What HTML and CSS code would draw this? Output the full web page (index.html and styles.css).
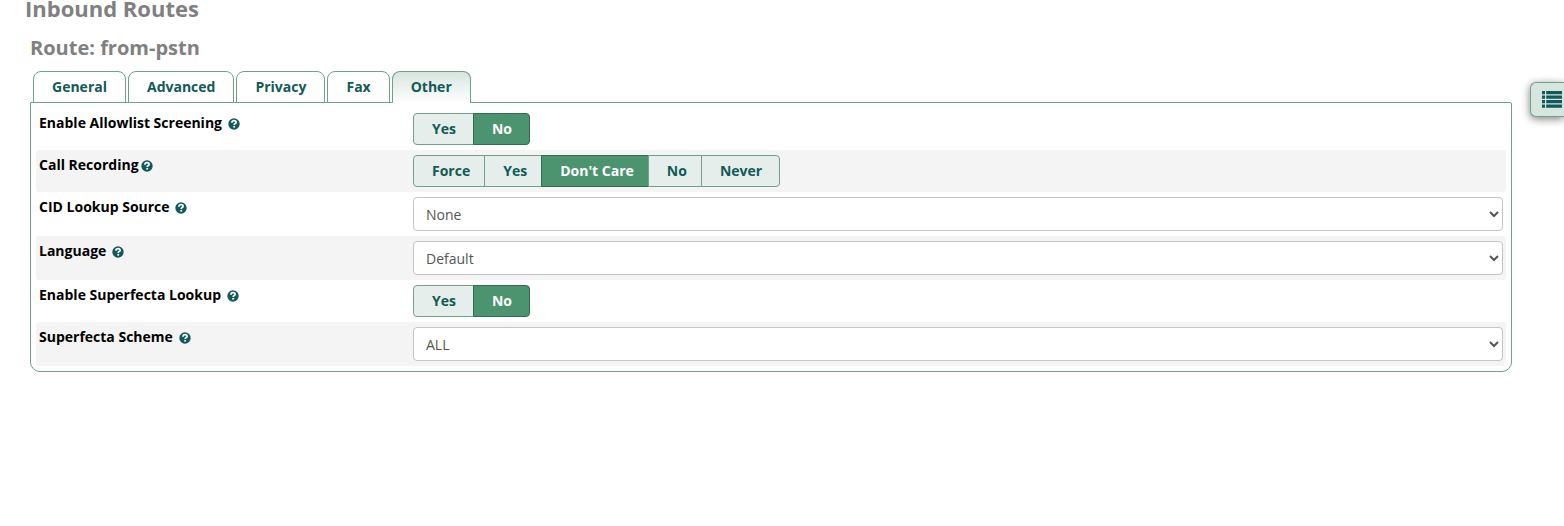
FILE: index.html
```
<!DOCTYPE html>
<html lang="en">
  <head>
    <meta charset="UTF-8" />
    <meta name="viewport" content="width=device-width, initial-scale=1.0" />
    <title>Inbound Routes</title>
    <link rel="stylesheet" href="styles.css">
  </head>
  <body>
    <!-- Shared help icon -->
    <svg class="sprite" aria-hidden="true">
      <symbol id="help" viewBox="0 0 12 12">
        <circle cx="6" cy="6" r="5.700" fill="#115a57" />
        <path d="M3.900 4.700C4 3.200 5 2.700 6.100 2.700C7.300 2.700 8.100 3.400 8.100 4.400C8.100 5.700 6.200 5.500 6.200 7" fill="none" stroke="#fff" stroke-width="1.700" />
        <rect x="5.300" y="7.900" width="1.800" height="1.700" fill="#fff" />
      </symbol>
    </svg>

    <main class="container">
      <h1>Inbound Routes</h1>
      <h2>Route: from-pstn</h2>

      <!-- Tabs -->
      <div class="tabs" role="tablist">
        <button class="tab" type="button" role="tab">General</button>
        <button class="tab" type="button" role="tab">Advanced</button>
        <button class="tab" type="button" role="tab">Privacy</button>
        <button class="tab" type="button" role="tab">Fax</button>
        <button class="tab active" type="button" role="tab" aria-selected="true">Other</button>
      </div>

      <form class="panel">
        <div class="row">
          <div class="label"><span id="allowlist-label">Enable Allowlist Screening</span> <svg class="help"><use href="#help" /></svg></div>
          <div class="radioset" role="radiogroup" aria-labelledby="allowlist-label">
            <input type="radio" name="allowlist" id="allowlist-yes" /><label for="allowlist-yes">Yes</label>
            <input type="radio" name="allowlist" id="allowlist-no" checked /><label for="allowlist-no">No</label>
          </div>
        </div>

        <div class="row">
          <div class="label"><span id="recording-label">Call Recording</span><svg class="help"><use href="#help" /></svg></div>
          <div class="radioset radioset-tight" role="radiogroup" aria-labelledby="recording-label">
            <input type="radio" name="recording" id="rec-force" /><label for="rec-force">Force</label>
            <input type="radio" name="recording" id="rec-yes" /><label for="rec-yes">Yes</label>
            <input type="radio" name="recording" id="rec-dontcare" checked /><label for="rec-dontcare">Don't Care</label>
            <input type="radio" name="recording" id="rec-no" /><label for="rec-no">No</label>
            <input type="radio" name="recording" id="rec-never" /><label for="rec-never">Never</label>
          </div>
        </div>

        <div class="row">
          <div class="label"><label for="cidlookup">CID Lookup Source</label> <svg class="help"><use href="#help" /></svg></div>
          <select id="cidlookup"><option>None</option></select>
        </div>

        <div class="row">
          <div class="label"><label for="language">Language</label> <svg class="help"><use href="#help" /></svg></div>
          <select id="language"><option>Default</option></select>
        </div>

        <div class="row">
          <div class="label"><span id="superfecta-label">Enable Superfecta Lookup</span> <svg class="help"><use href="#help" /></svg></div>
          <div class="radioset" role="radiogroup" aria-labelledby="superfecta-label">
            <input type="radio" name="superfecta" id="superfecta-yes" /><label for="superfecta-yes">Yes</label>
            <input type="radio" name="superfecta" id="superfecta-no" checked /><label for="superfecta-no">No</label>
          </div>
        </div>

        <div class="row">
          <div class="label"><label for="scheme">Superfecta Scheme</label> <svg class="help"><use href="#help" /></svg></div>
          <select id="scheme"><option>ALL</option></select>
        </div>
      </form>
    </main>

    <!-- Floating list toggle -->
    <button class="list-toggle" type="button" aria-label="Show list">
      <svg width="20" height="17" viewBox="0 0 20 17" fill="#115a57">
        <path d="M0 0h3v3.200H0zM0 4.500h3v3.200H0zM0 9h3v3.200H0zM0 13.500h3v3.200H0zM4.200 0H20v3.200H4.200zM4.200 4.500H20v3.200H4.200zM4.200 9H20v3.200H4.200zM4.200 13.500H20v3.200H4.200z" />
      </svg>
    </button>
  </body>
</html>
```
FILE: styles.css
```
* {
  box-sizing: border-box;
}

body {
  margin: 0;
  font-family: "Open Sans", sans-serif;
  font-size: 14px;
  line-height: 20px;
  color: #000;
  background: #fff;
}

.sprite {
  display: none;
}

.container {
  padding: 0 52px 0 30px;
}

h1,
h2 {
  margin: 0;
  font-weight: bold;
  color: #808080;
}

h1 {
  margin-left: -5px;
  font-size: 22px;
  line-height: 16px;
}

h2 {
  padding: 20px 0 11px;
  font-size: 20px;
  line-height: 24px;
}

/* Tabs */
.tabs {
  display: flex;
  gap: 2px;
  padding-left: 3px;
  position: relative;
  z-index: 1;
}

.tab {
  height: 32px;
  margin-bottom: -1px;
  padding: 0 18px 2px;
  border: 1px solid #6fa18b;
  border-radius: 8px 8px 0 0;
  background: #fff;
  color: #115a57;
  font: bold 14px "Open Sans", sans-serif;
  cursor: pointer;
}

.tab.active {
  border-bottom: 0;
  background: linear-gradient(#d7e5df, #fff);
}

/* Form panel */
.panel {
  padding: 5px;
  border: 1px solid #6fa18b;
  border-radius: 0 2px 10px 10px;
}

.row {
  display: grid;
  grid-template-columns: 374px 1fr;
  padding: 5px 3px;
  border-radius: 3px;
}

.row:nth-child(even) {
  background: #f4f4f4;
}

.label {
  font-weight: bold;
}

.help {
  width: 12px;
  height: 12px;
  margin-left: 2px;
  vertical-align: -2px;
}

select {
  width: 100%;
  height: 34px;
  padding: 0 8px;
  border: 1px solid #c4c4c4;
  border-radius: 4px;
  background: #fff;
  color: #555;
  font: 14px "Open Sans", sans-serif;
}

/* Radio buttons drawn as a button group */
.radioset {
  display: flex;
}

.radioset input {
  position: absolute;
  opacity: 0;
  pointer-events: none;
}

.radioset label {
  height: 32px;
  padding: 0 17px 0 18px;
  border: 1px solid #6fa18b;
  background: #e5eeea;
  color: #115a57;
  font-weight: bold;
  line-height: 30px;
  cursor: pointer;
}

.radioset label:not(:last-child) {
  margin-right: -1px;
}

.radioset-tight label:not(:last-child) {
  padding-right: 14px;
}

.radioset label:first-of-type {
  border-radius: 4px 0 0 4px;
}

.radioset label:last-child {
  border-radius: 0 4px 4px 0;
}

.radioset input:checked + label {
  border-color: #356b50;
  background: #4c9470;
  color: #fff;
}

/* Floating list toggle */
.list-toggle {
  position: fixed;
  top: 82px;
  right: 0;
  height: 35px;
  padding: 0 2px 0 11px;
  border: 1px solid #6fa18b;
  border-right: 0;
  border-radius: 6px 0 0 6px;
  background: #d7e5df;
  box-shadow: 0 2px 8px rgba(0, 0, 0, 0.5);
  cursor: pointer;
}

.list-toggle svg {
  display: block;
}
```
